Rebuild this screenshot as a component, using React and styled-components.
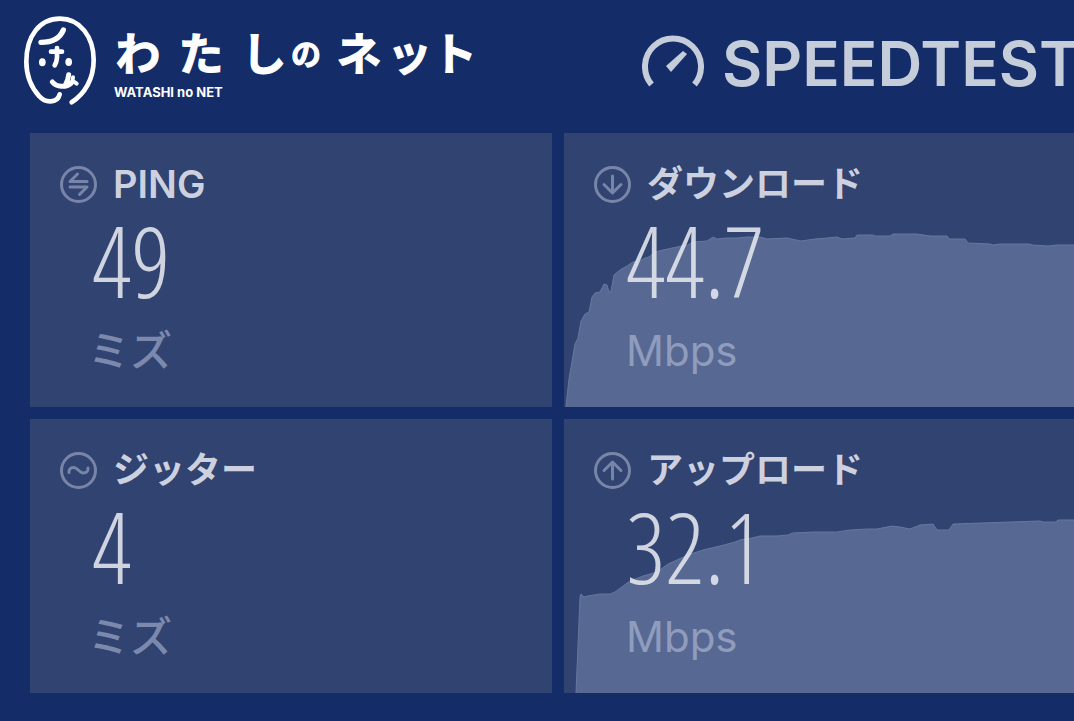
import React from 'react';
import styled, {createGlobalStyle} from 'styled-components';

const downloadLine = '2,274 5,246 11,211 14,205 17,188 21,181 25,179 28,164 31,160 36,159 40,151 43,152 45,159 47,158 50,142 56,137 63,133 69,129 76,128 81,125 85,124 91,119 99,117 113,114 124,112 129,109 143,108 149,104 153,106 163,105 173,105 183,104 196,104 203,106 223,105 237,108 251,106 263,105 273,104 278,106 291,105 293,102 309,102 311,103 326,103 329,101 353,101 366,103 383,103 385,106 401,106 404,110 426,111 429,112 436,111 465,111 468,112 484,113 493,112 512,112';

const uploadLine = '12,274 16,178 17,175 20,178 24,177 36,175 46,175 51,173 66,162 79,157 93,153 104,145 124,136 139,131 156,127 171,123 176,121 188,119 196,117 213,117 224,116 229,114 249,113 273,113 286,111 303,110 313,110 328,107 336,108 346,110 356,106 369,105 373,111 385,111 389,105 476,102 479,103 492,103 494,101 512,101';

const icons = {
    ping: <path d="M27 15.500H10L17.500 8M10 21h17l-7.500 7.500" />,
    jitter: <path d="M9 20.500v-1c0-2.500 2-4 4.500-4 4.500 0 5.500 5.500 10 5.500 2.500 0 4.500-1.500 4.500-4v-1" />,
    download: <path d="M18.500 10v17M10 18.500l8.500 8.500 8.500-8.500" />,
    upload: <path d="M18.500 27V10M10 18.500l8.500-8.500 8.500 8.500" />,
};

const results = [
    {id: 'ping', label: 'PING', value: '49', unit: 'ミズ', latin: true},
    {id: 'download', label: 'ダウンロード', value: '44.7', unit: 'Mbps', line: downloadLine},
    {id: 'jitter', label: 'ジッター', value: '4', unit: 'ミズ'},
    {id: 'upload', label: 'アップロード', value: '32.1', unit: 'Mbps', line: uploadLine},
];

function FaceLogo() {
    return (
        <svg width="72" height="90" viewBox="42 33 216 270" fill="none" stroke="#fff" strokeLinecap="round" strokeLinejoin="round" aria-hidden="true">
            <path strokeWidth="14" d="M149 268C142 296 105 294 88 274C62 245 49 213 49 170C49 92 90 41 150 41C210 41 251 95 251 165C251 222 224 267 185 292" />
            <path strokeWidth="16" d="M93 112C125 112 150 100 160 75" />
            <path strokeWidth="14" d="M123 140H156M141 129V158Q140 172 134 181" />
            <path strokeWidth="15" d="M127 231C140 247 168 248 184 234M176 209C175 220 172 228 168 236" />
            <path strokeWidth="12" d="M189 217C189 224 188 230 184 234M189 228L200 236" />
            <g fill="#fff" stroke="none">
                <ellipse cx="97" cy="172" rx="10" ry="12" />
                <ellipse cx="176" cy="171" rx="10" ry="12" />
            </g>
        </svg>
    );
}

function Result({id, label, value, unit, line, latin}) {
    return (
        <Card>
            {line && (
                <Chart viewBox="0 0 510 274" preserveAspectRatio="none" aria-hidden="true">
                    <polygon points={`${line} 512,276 2,276`} />
                    <polyline points={line} />
                </Chart>
            )}
            <CardHead>
                <CardIcon viewBox="0 0 37 37" aria-hidden="true">
                    <circle cx="18.500" cy="18.500" r="17" />
                    {icons[id]}
                </CardIcon>
                <Label $latin={latin}>{label}</Label>
            </CardHead>
            <Value>{value}</Value>
            <Unit $kana={unit !== 'Mbps'}>{unit}</Unit>
        </Card>
    );
}

function App() {
    return (
        <Page>
            <GlobalStyle />
            <Header>
                <Brand>
                    <FaceLogo />
                    <div>
                        <BrandName>
                            <span>わ</span>
                            <span>た</span>
                            <span>し</span>
                            <small>の</small>
                            <span>ネ</span>
                            <span>ット</span>
                        </BrandName>
                        <BrandSub>WATASHI no NET</BrandSub>
                    </div>
                </Brand>
                <Title>
                    <svg width="62" height="56" viewBox="0 0 62 56" aria-hidden="true">
                        <path d="M9.500 50.500A28 28 0 1 1 52.500 50.500" fill="none" stroke="#c5ccda" strokeWidth="6" />
                        <path d="M24 32L41 17L45 20L29 38Z" fill="#c5ccda" />
                    </svg>
                    <h1>SPEEDTEST</h1>
                </Title>
            </Header>
            <Results>
                {results.map((item) => <Result key={item.id} {...item} />)}
            </Results>
        </Page>
    );
}

export default App;

const GlobalStyle = createGlobalStyle`
    * {
        box-sizing: border-box;
    }
    body {
        margin: 0;
        background: #142d68;
        font-family: Inter, "Noto Sans CJK JP", sans-serif;
    }
    h1, h2, p {
        margin: 0;
    }
`;

const Page = styled.main`
    min-height: 100vh;
    padding: 0 0 28px 30px;
    overflow: hidden;
`;

const Header = styled.header`
    display: grid;
    grid-template-columns: 612fr 432fr;
    height: 133px;
    padding-top: 16px;
`;

const Brand = styled.div`
    display: flex;
    align-items: flex-start;
    gap: 16px;
    min-width: 0;
    margin-left: -6px;
    color: #fff;
`;

const BrandName = styled.div`
    display: grid;
    grid-template-columns: 52px 74px 52px 32px 74px 72px;
    align-items: center;
    justify-items: center;
    margin-top: 10px;
    font: 700 45px/52px "Noto Sans CJK JP", sans-serif;
    white-space: nowrap;
    -webkit-text-stroke: 1px #fff;
    small {
        font-size: 30px;
    }
`;

const BrandSub = styled.p`
    margin-top: 6px;
    padding-left: 2px;
    font-size: 13px;
    font-weight: 700;
    line-height: 16px;
    white-space: nowrap;
`;

const Title = styled.div`
    display: flex;
    align-items: flex-start;
    gap: 18px;
    min-width: 0;
    padding-top: 18px;
    svg {
        flex: none;
    }
    h1 {
        color: #c5ccda;
        font-size: 62px;
        font-weight: 600;
        line-height: 60px;
    }
`;

const Results = styled.section`
    display: grid;
    grid-template-columns: 522fr 510fr;
    gap: 12px;
`;

const Card = styled.article`
    position: relative;
    min-width: 0;
    height: 274px;
    padding: 30px;
    background: #304371;
`;

const Chart = styled.svg`
    position: absolute;
    inset: 0;
    width: 100%;
    height: 100%;
    polygon {
        fill: #576993;
    }
    polyline {
        fill: none;
        stroke: #67779f;
    }
`;

const CardHead = styled.div`
    position: relative;
    display: flex;
    align-items: center;
    gap: 16px;
    height: 42px;
`;

const CardIcon = styled.svg`
    width: 37px;
    height: 37px;
    fill: none;
    stroke: #7985a8;
    stroke-width: 3;
    stroke-linecap: round;
    stroke-linejoin: round;
`;

const Label = styled.h2`
    color: #cdd1df;
    font-size: ${(props) => (props.$latin ? '38px' : '36px')};
    font-weight: 600;
    line-height: 42px;
    white-space: nowrap;
`;

const Value = styled.p`
    position: relative;
    padding-left: 32px;
    color: rgba(225, 228, 236, 0.9);
    font-family: "Open Sans Condensed Light", "Open Sans", sans-serif;
    font-size: 98px;
    font-weight: 300;
    line-height: 110px;
`;

const Unit = styled.p`
    position: relative;
    margin-top: 10px;
    padding-left: ${(props) => (props.$kana ? '28px' : '32px')};
    color: rgba(201, 207, 232, 0.5);
    font-size: 42px;
    font-weight: ${(props) => (props.$kana ? 500 : 400)};
    line-height: 52px;
`;
